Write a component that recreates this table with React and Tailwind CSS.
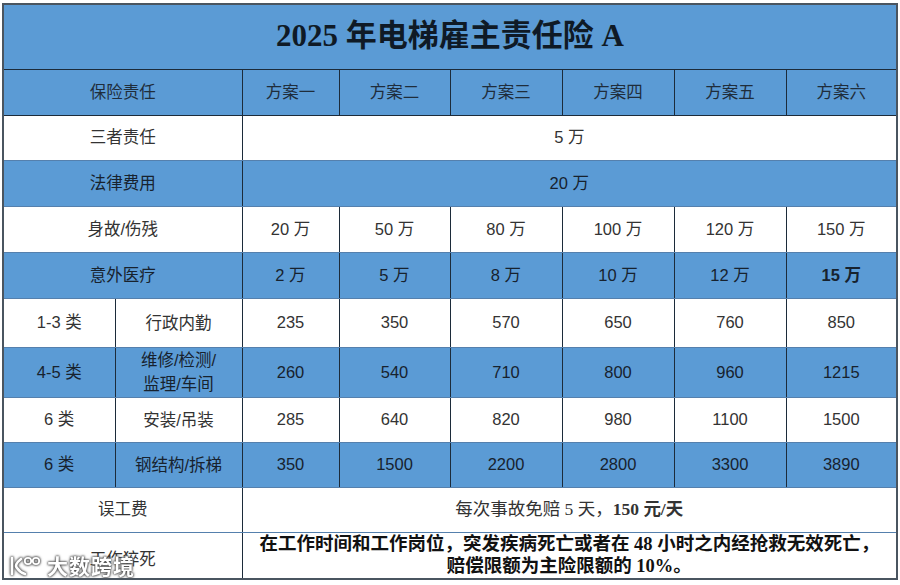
import React from "react";

const plans = ["方案一", "方案二", "方案三", "方案四", "方案五", "方案六"];

const rows = [
  { label: "三者责任", span: "5 万", blue: false, h: "h-[45px]" },
  { label: "法律费用", span: "20 万", blue: true, h: "h-[46px]" },
  { label: "身故/伤残", values: ["20 万", "50 万", "80 万", "100 万", "120 万", "150 万"], blue: false, h: "h-[46px]" },
  { label: "意外医疗", values: ["2 万", "5 万", "8 万", "10 万", "12 万", "15 万"], blue: true, h: "h-[46px]" },
];

const jobs = [
  { cls: "1-3 类", job: "行政内勤", values: ["235", "350", "570", "650", "760", "850"], blue: false, h: "h-[49px]" },
  { cls: "4-5 类", job: "维修/检测/\n监理/车间", values: ["260", "540", "710", "800", "960", "1215"], blue: true, h: "h-[50px]" },
  { cls: "6 类", job: "安装/吊装", values: ["285", "640", "820", "980", "1100", "1500"], blue: false, h: "h-[45px]" },
  { cls: "6 类", job: "钢结构/拆梯", values: ["350", "1500", "2200", "2800", "3300", "3890"], blue: true, h: "h-[45px]" },
];

const cell = "border-x border-x-[#1c2b3a] border-y border-y-[#5580ad] text-center align-middle p-0";

function rowTone(blue) {
  return blue ? "bg-[#5b9bd5] text-[#17222e]" : "bg-white text-[#333]";
}

export default function App() {
  return (
    <div className="relative w-[900px] h-[585px] bg-white pt-[3px] pl-[2px] font-['Liberation_Sans','Noto_Sans_CJK_SC',sans-serif] text-[16.5px]">
      <table className="table-fixed border-collapse w-[894px] border-2 border-[#4a5560]">
        <colgroup>
          <col className="w-[112px]" />
          <col className="w-[127px]" />
          <col className="w-[97px]" />
          <col className="w-[111px]" />
          <col className="w-[112px]" />
          <col className="w-[112px]" />
          <col className="w-[112px]" />
          <col className="w-[111px]" />
        </colgroup>
        <tbody>
          <tr className="h-[65px] bg-[#5b9bd5]">
            <td colSpan={8} className="border-b border-b-[#1c2b3a] text-center align-middle font-['Liberation_Serif','Noto_Sans_CJK_SC',serif] text-[31px] font-semibold text-[#0f1a26] pb-[2px]">
              2025 年电梯雇主责任险 A
            </td>
          </tr>
          <tr className="h-[46px] bg-[#5b9bd5] text-[#1f2d3b]">
            <td colSpan={2} className="border-x border-x-[#1c2b3a] border-b border-b-[#1c2b3a] text-center">保险责任</td>
            {plans.map((p) => (
              <td key={p} className="border-x border-x-[#1c2b3a] border-b border-b-[#1c2b3a] text-center">{p}</td>
            ))}
          </tr>
          {rows.map((r) => (
            <tr key={r.label} className={`${r.h} ${rowTone(r.blue)}`}>
              <td colSpan={2} className={cell}>{r.label}</td>
              {r.span ? (
                <td colSpan={6} className={cell}>{r.span}</td>
              ) : (
                r.values.map((v, i) => (
                  <td key={i} className={`${cell} ${r.label === "意外医疗" && i === 5 ? "font-bold" : ""}`}>{v}</td>
                ))
              )}
            </tr>
          ))}
          {jobs.map((r, idx) => (
            <tr key={idx} className={`${r.h} ${rowTone(r.blue)}`}>
              <td className={cell}>{r.cls}</td>
              <td className={`${cell} whitespace-pre-line leading-[24px]`}>{r.job}</td>
              {r.values.map((v, i) => (
                <td key={i} className={cell}>{v}</td>
              ))}
            </tr>
          ))}
          <tr className="h-[45px] bg-white text-[#333]">
            <td colSpan={2} className={cell}>误工费</td>
            <td colSpan={6} className={`${cell} font-['Liberation_Serif','Noto_Sans_CJK_SC',serif] text-[17.5px]`}>
              每次事故免赔 5 天，<span className="font-bold">150 元/天</span>
            </td>
          </tr>
          <tr className="h-[47px] bg-white text-[#333]">
            <td colSpan={2} className={`${cell} pt-[8px]`}>工作猝死</td>
            <td colSpan={6} className={`${cell} font-['Liberation_Serif','Noto_Sans_CJK_SC',serif] font-bold text-[#111] leading-[22px] text-[18.5px]`}>
              在工作时间和工作岗位，突发疾病死亡或者在 48 小时之内经抢救无效死亡，
              <br />
              赔偿限额为主险限额的 10%。
            </td>
          </tr>
        </tbody>
      </table>
      {/* watermark */}
      <div className="absolute left-[8px] top-[554px] flex items-center gap-[5px] text-white [filter:drop-shadow(0_0_1px_#444)_drop-shadow(0_0_1px_#666)]">
        <svg width="34" height="24" viewBox="0 0 34 24" fill="none" stroke="white" strokeWidth="2.6" strokeLinecap="round" strokeLinejoin="round">
          <path d="M4 4 V20" />
          <path d="M13 5 C8 9 7 12 9 14 C11 17 14 19 17 20" />
          <circle cx="20" cy="7" r="3.2" strokeWidth="1.8" />
          <circle cx="28" cy="7" r="3.2" strokeWidth="1.8" />
        </svg>
        <span className="text-[21px] font-bold tracking-[1px] leading-none">大数跨境</span>
      </div>
    </div>
  );
}
